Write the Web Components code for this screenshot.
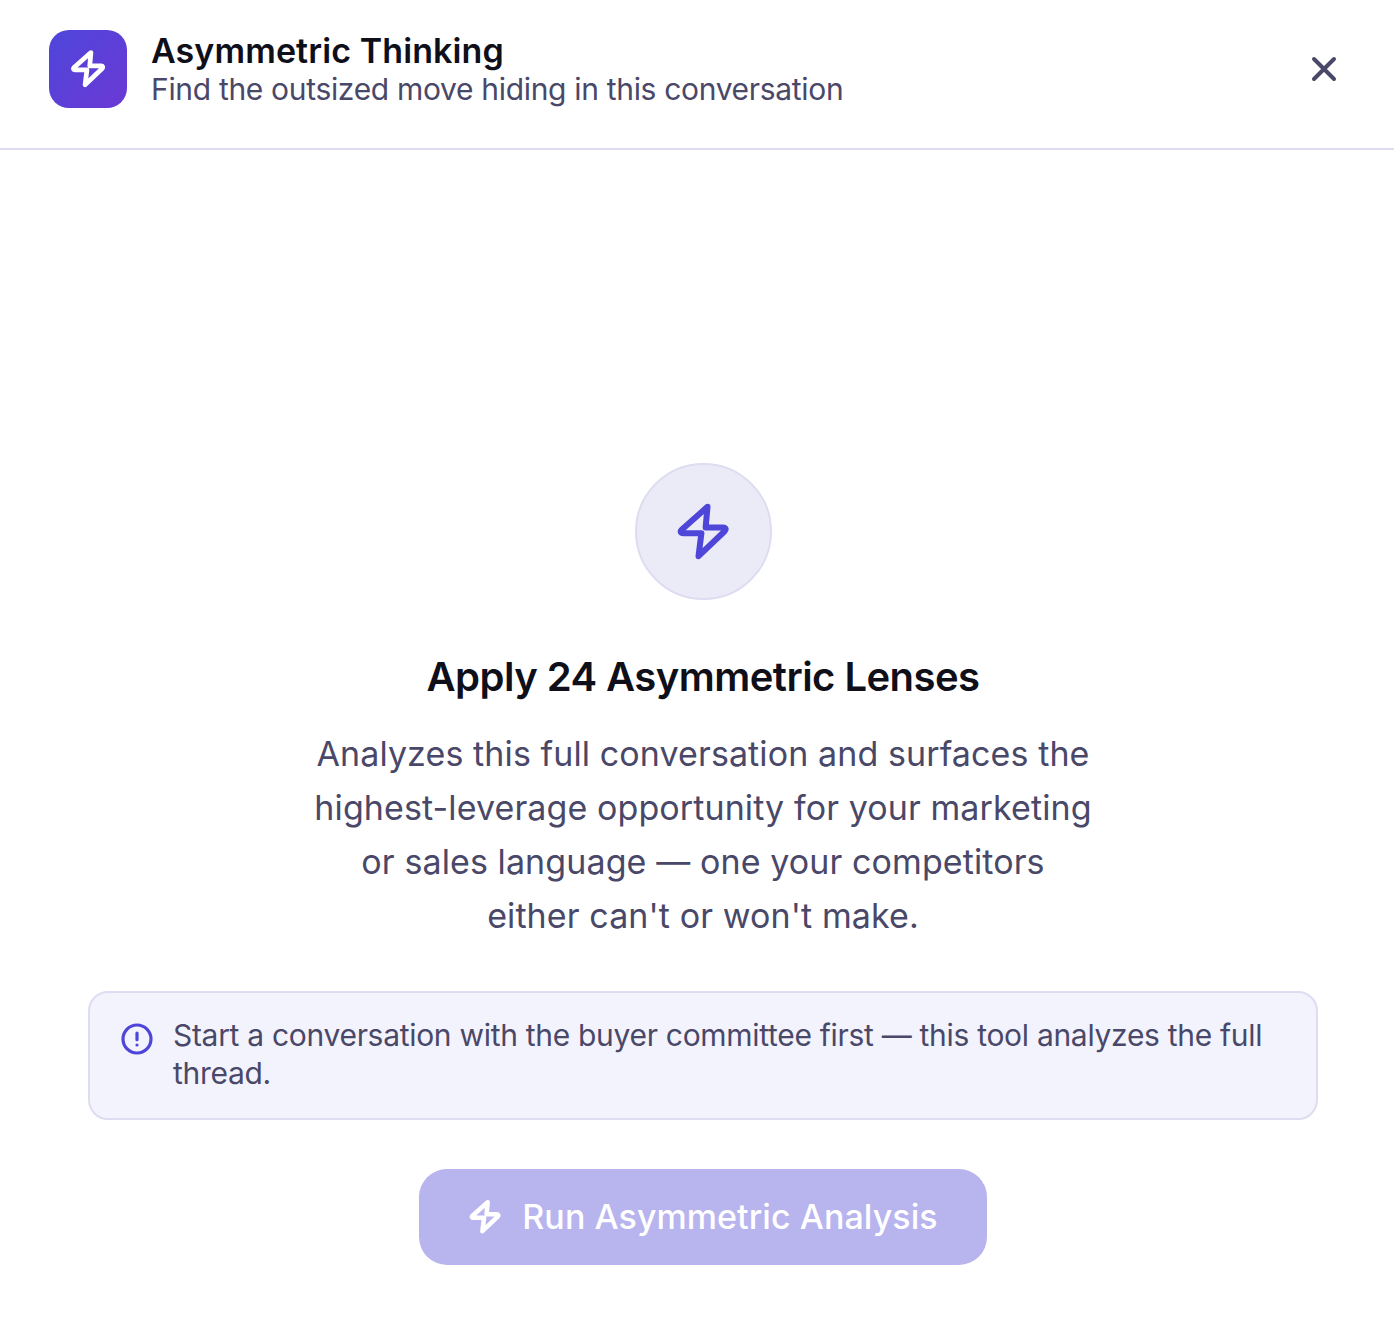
<!DOCTYPE html>
<html>
<head>
<meta charset="utf-8">
<title>Asymmetric Thinking</title>
<style>
    html, body {
        margin: 0;
        background: #ffffff;
        font-family: Inter, "Liberation Sans", sans-serif;
    }
</style>
</head>
<body>
<tool-panel>
    <panel-header slot="header" title="Asymmetric Thinking" subtitle="Find the outsized move hiding in this conversation"></panel-header>
    <lens-intro heading="Apply 24 Asymmetric Lenses">
        <span>Analyzes this full conversation and surfaces the<br>highest-leverage opportunity for your marketing<br>or sales language — one your competitors<br>either can't or won't make.</span>
    </lens-intro>
    <notice-box>Start a conversation with the buyer committee first — this tool analyzes the full thread.</notice-box>
    <run-button>Run Asymmetric Analysis</run-button>
</tool-panel>
<script>
const ZAP = 'M13.85 1.6 3.17 11.1c-.76.7-.33 1.4.65 1.4h7.52L10.15 22l10.8-10.3c.76-.8.44-1.6-.65-1.6H13.09z'

function zapIcon(size, color, width) {
    return `<svg width="${size}" height="${size}" viewBox="0 0 24 24" fill="none" stroke="${color}" stroke-width="${width}" stroke-linecap="round" stroke-linejoin="round"><path d="${ZAP}"/></svg>`
}

class ToolPanel extends HTMLElement {
    constructor() {
        super()
        this.attachShadow({mode: 'open'})
        this.shadowRoot.innerHTML = `
        <style>
            :host {
                display: block;
                height: 1320px;
                background: #ffffff;
                color: #4a4868;
            }
            main {
                display: flex;
                flex-direction: column;
                align-items: center;
                padding: 313px 76px 0 88px;
            }
        </style>
        <slot name="header"></slot>
        <main><slot></slot></main>
        `
    }
}
customElements.define('tool-panel', ToolPanel)

class PanelHeader extends HTMLElement {
    constructor() {
        super()
        this.attachShadow({mode: 'open'})
    }
    connectedCallback() {
        this.shadowRoot.innerHTML = `
        <style>
            :host {
                display: block;
            }
            header {
                display: flex;
                align-items: center;
                gap: 24px;
                box-sizing: border-box;
                height: 150px;
                padding: 30px 48px 40px 49px;
                border-bottom: 2px solid #dedcf0;
            }
            .logo {
                flex: none;
                width: 78px;
                height: 78px;
                border-radius: 20px;
                background: linear-gradient(135deg, #4e46da, #6b38d4);
                display: flex;
                align-items: center;
                justify-content: center;
            }
            .text {
                flex: 1;
                margin-top: 1px;
            }
            .title {
                font-size: 34px;
                line-height: 38px;
                font-weight: 600;
                letter-spacing: 0.1px;
                color: #0f0f1a;
            }
            .subtitle {
                font-size: 30px;
                letter-spacing: -0.32px;
                line-height: 38px;
                color: #4a4868;
            }
            .close {
                width: 44px;
                height: 44px;
                display: flex;
                align-items: center;
                justify-content: center;
            }
        </style>
        <header>
            <div class="logo">${zapIcon(38, '#ffffff', 3)}</div>
            <div class="text">
                <div class="title">${this.getAttribute('title')}</div>
                <div class="subtitle">${this.getAttribute('subtitle')}</div>
            </div>
            <div class="close">
                <svg width="40" height="40" viewBox="0 0 24 24" fill="none" stroke="#4a4868" stroke-width="2.4" stroke-linecap="round"><path d="M18 6 6 18M6 6l12 12"/></svg>
            </div>
        </header>
        `
    }
}
customElements.define('panel-header', PanelHeader)

class LensIntro extends HTMLElement {
    constructor() {
        super()
        this.attachShadow({mode: 'open'})
    }
    connectedCallback() {
        this.shadowRoot.innerHTML = `
        <style>
            :host {
                display: flex;
                flex-direction: column;
                align-items: center;
                align-self: stretch;
                text-align: center;
            }
            .badge {
                box-sizing: border-box;
                width: 137px;
                height: 137px;
                border: 2px solid #dedcf0;
                border-radius: 50%;
                background: #ebebf8;
                display: flex;
                align-items: center;
                justify-content: center;
            }
            h2 {
                margin: 52px 0 25px;
                font-size: 40px;
                letter-spacing: -0.54px;
                line-height: 50px;
                font-weight: 600;
                color: #0f0f1a;
            }
            p {
                margin: 0;
                font-size: 34px;
                letter-spacing: 0.1px;
                line-height: 54px;
                color: #4a4868;
            }
        </style>
        <div class="badge">${zapIcon(58, '#4e46d8', 2.5)}</div>
        <h2>${this.getAttribute('heading')}</h2>
        <p><slot></slot></p>
        `
    }
}
customElements.define('lens-intro', LensIntro)

class NoticeBox extends HTMLElement {
    constructor() {
        super()
        const shadowRoot = this.attachShadow({mode: 'open'})
        shadowRoot.innerHTML = `
        <style>
            :host {
                display: flex;
                align-self: stretch;
                gap: 20px;
                box-sizing: border-box;
                height: 129px;
                margin-top: 48px;
                padding: 23px 31px;
                border: 2px solid #dedcf0;
                border-radius: 20px;
                background: #f3f3fd;
                font-size: 30px;
                letter-spacing: -0.3px;
                line-height: 38px;
                color: #4a4868;
            }
            svg {
                flex: none;
                margin-top: 7px;
            }
        </style>
        <svg width="32" height="32" viewBox="0 0 24 24" fill="none" stroke="#4e46d8" stroke-width="2.4" stroke-linecap="round"><circle cx="12" cy="12" r="10.5"/><path d="M12 7.5v5M12 16.5h.01"/></svg>
        <div><slot></slot></div>
        `
    }
}
customElements.define('notice-box', NoticeBox)

class RunButton extends HTMLElement {
    constructor() {
        super()
        const shadowRoot = this.attachShadow({mode: 'open'})
        shadowRoot.innerHTML = `
        <style>
            :host {
                display: flex;
                align-items: center;
                justify-content: center;
                gap: 20px;
                box-sizing: border-box;
                width: 568px;
                height: 96px;
                margin-top: 49px;
                padding-bottom: 1px;
                border-radius: 28px;
                background: #b8b4ee;
                color: #ffffff;
                font-size: 34px;
                letter-spacing: 0.06px;
                font-weight: 500;
            }
        </style>
        ${zapIcon(34, '#ffffff', 3.2)}
        <span><slot></slot></span>
        `
    }
}
customElements.define('run-button', RunButton)
</script>
</body>
</html>
